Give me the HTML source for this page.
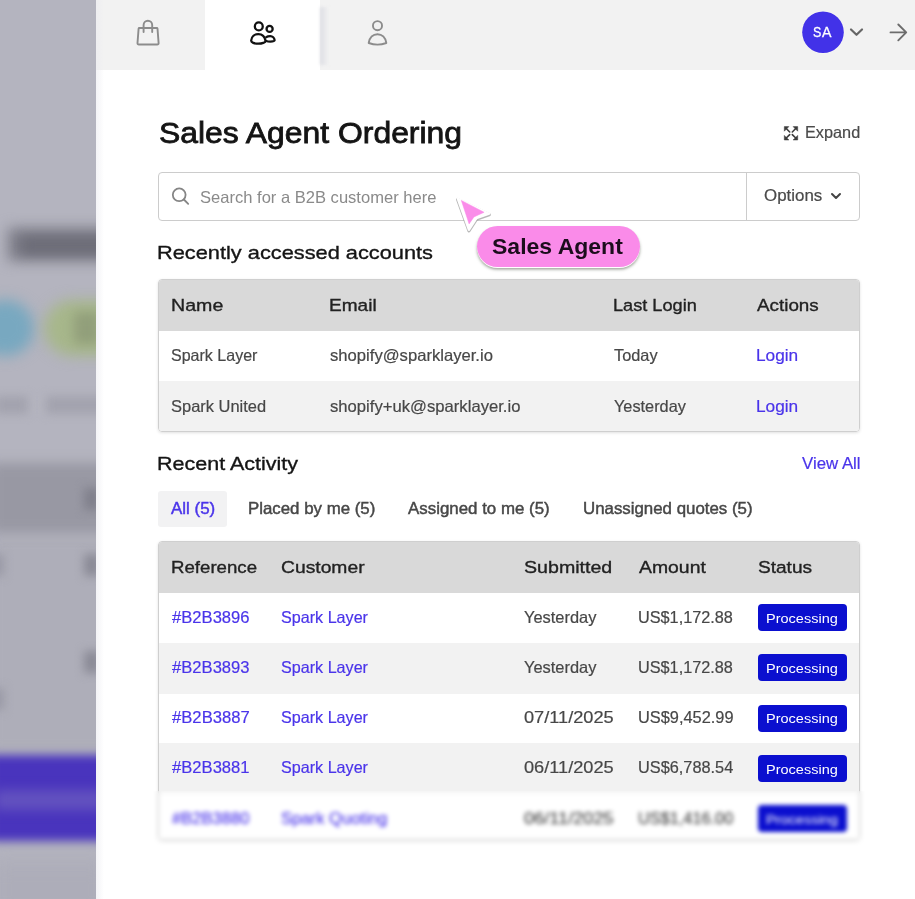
<!DOCTYPE html>
<html><head><meta charset="utf-8">
<style>
*{box-sizing:border-box;margin:0;padding:0}
html,body{width:915px;height:899px;overflow:hidden}
body{position:relative;background:#b4b4bf;font-family:"Liberation Sans",sans-serif;color:#222}
.abs{position:absolute}
#bg{position:absolute;left:0;top:0;width:96px;height:899px;overflow:hidden}
#bg .b{position:absolute;filter:blur(6px)}
#panel{position:absolute;left:96px;top:0;width:819px;height:899px;background:#fff}
#topbar{position:absolute;left:96px;top:0;width:819px;height:70px;background:#f2f2f2}
#acttab{position:absolute;left:205px;top:0;width:115px;height:71px;background:#fff}
.t{position:absolute;white-space:nowrap;line-height:1;transform-origin:0 0}
.tbl{position:absolute;left:158px;width:702px;border:1px solid #cfcfcf;border-radius:4px;overflow:hidden;box-shadow:0 1px 3px rgba(0,0,0,0.12)}
.row{position:absolute;left:0;width:700px}
.badge{position:absolute;left:758px;width:89px;height:27px;background:#0b0fcf;border-radius:4px}
</style></head>
<body>
<div id="bg">
  <div class="b" style="left:-10px;top:860px;width:120px;height:60px;background:#adadb9;filter:blur(10px)"></div>
  <div class="b" style="left:8px;top:228px;width:104px;height:33px;background:#7c7c87;filter:blur(7px)"></div>
  <div class="b" style="left:22px;top:237px;width:90px;height:17px;background:#6c6c77;filter:blur(6px)"></div>
  <div class="b" style="left:-24px;top:300px;width:58px;height:56px;border-radius:28px;background:#78a8c0;filter:blur(7px)"></div>
  <div class="b" style="left:44px;top:300px;width:94px;height:56px;border-radius:28px;background:#a7b78b;filter:blur(7px)"></div>
  <div class="b" style="left:74px;top:312px;width:26px;height:32px;background:#919e7a;filter:blur(6px)"></div>
  <div class="b" style="left:-4px;top:396px;width:32px;height:18px;background:#a3a3ae;filter:blur(5px)"></div>
  <div class="b" style="left:46px;top:396px;width:64px;height:18px;background:#a3a3ae;filter:blur(5px)"></div>
  <div class="b" style="left:-10px;top:536px;width:120px;height:216px;background:#aeaeb9;filter:blur(6px)"></div>
  <div class="b" style="left:-10px;top:463px;width:120px;height:70px;background:#9898a3;filter:blur(6px)"></div>
  <div class="b" style="left:84px;top:488px;width:16px;height:22px;background:#80808c;filter:blur(5px)"></div>
  <div class="b" style="left:84px;top:554px;width:16px;height:22px;background:#8a8a96;filter:blur(5px)"></div>
  <div class="b" style="left:84px;top:651px;width:16px;height:22px;background:#8a8a96;filter:blur(5px)"></div>
  <div class="b" style="left:-10px;top:554px;width:14px;height:22px;background:#9a9aa6;filter:blur(5px)"></div>
  <div class="b" style="left:-10px;top:688px;width:14px;height:22px;background:#9a9aa6;filter:blur(5px)"></div>
  <div class="b" style="left:-10px;top:755px;width:120px;height:86px;background:#4934bd;filter:blur(5px)"></div>
  <div class="b" style="left:-5px;top:790px;width:110px;height:20px;background:#6352bf;filter:blur(6px)"></div>
</div>
<div id="panel"></div>
<div id="topbar"></div>
<div class="abs" style="left:96px;top:0;width:8px;height:899px;background:linear-gradient(to right,rgba(235,235,240,0.6),rgba(255,255,255,0))"></div>
<div id="acttab"></div>
<div class="abs" style="left:320px;top:7px;width:9px;height:58px;background:linear-gradient(to right,#dcdde3,#f2f2f2);filter:blur(1.5px)"></div>

<svg class="abs" style="left:0;top:0" width="915" height="70" viewBox="0 0 915 70" fill="none" stroke-linecap="round" stroke-linejoin="round">
  <g stroke="#8c8c8c" stroke-width="1.9">
    <path d="M139.2 28 H156.9 Q157.4 28 157.5 28.6 L158.6 43 Q158.7 44.5 157.2 44.5 H138.9 Q137.4 44.5 137.5 43 L138.6 28.6 Q138.7 28 139.2 28 Z"/>
    <path d="M143.6 32 V25 A4.3 4.3 0 0 1 152.2 25 V32"/>
    <circle cx="377.5" cy="25.7" r="4.55"/>
    <path d="M368.7 43 C369.5 37.5 373 34.2 377.5 34.2 C382 34.2 385.5 37.5 386.3 43 C381 45 374 45 368.7 43 Z"/>
  </g>
  <g stroke="#111" stroke-width="2.3">
    <circle cx="258.8" cy="26.4" r="3.95"/>
    <circle cx="269.6" cy="28.9" r="3.05"/>
    <path d="M251.2 40.5 C251.5 36.5 254.5 34.1 258.3 34.1 C262 34.1 264.8 36.5 265.5 40.8 C265.6 42.5 262 43.7 258.3 43.7 C254.5 43.7 251 42.5 251.2 40.5 Z"/>
    <path d="M266.3 37.2 C267.5 36.2 269 36.1 270.3 36.1 C272.5 36.1 274.4 38 274.6 40.2 C274.5 41.3 272 41.6 270.3 41.6 C268.5 41.6 267 41.3 266.3 41"/>
  </g>
  <circle cx="823" cy="32.2" r="21.3" fill="#fbfbf4" stroke="none"/>
  <circle cx="823" cy="32.2" r="20.8" fill="#4232e8" stroke="none"/>
  <path d="M851 29.5 L856.5 34.8 L862 29.5" stroke="#666" stroke-width="2.2"/>
  <path d="M890.5 32.4 H906 M898.3 24.5 L906.2 32.4 L898.3 40.3" stroke="#6c6c6c" stroke-width="1.9"/>
</svg>
<svg class="abs" style="left:0;top:100px" width="915" height="60" viewBox="0 100 915 60"><path d="M789.7 132.0 L786.0 128.3" stroke="#3c3c3c" stroke-width="1.6" stroke-linecap="round"/><path d="M784.3 126.6 L788.9 126.6 L784.3 131.2 Z" fill="#3c3c3c" stroke="#3c3c3c" stroke-width="0.5" stroke-linejoin="round"/><path d="M789.7 134.6 L786.0 138.3" stroke="#3c3c3c" stroke-width="1.6" stroke-linecap="round"/><path d="M784.3 140.0 L788.9 140.0 L784.3 135.4 Z" fill="#3c3c3c" stroke="#3c3c3c" stroke-width="0.5" stroke-linejoin="round"/><path d="M792.3 132.0 L796.0 128.3" stroke="#3c3c3c" stroke-width="1.6" stroke-linecap="round"/><path d="M797.7 126.6 L793.1 126.6 L797.7 131.2 Z" fill="#3c3c3c" stroke="#3c3c3c" stroke-width="0.5" stroke-linejoin="round"/><path d="M792.3 134.6 L796.0 138.3" stroke="#3c3c3c" stroke-width="1.6" stroke-linecap="round"/><path d="M797.7 140.0 L793.1 140.0 L797.7 135.4 Z" fill="#3c3c3c" stroke="#3c3c3c" stroke-width="0.5" stroke-linejoin="round"/></svg>

<div class="abs" style="left:158px;top:172px;width:702px;height:49px;border:1px solid #cccccc;border-radius:4px;background:#fff"></div>
<div class="abs" style="left:746px;top:173px;width:1px;height:47px;background:#cccccc"></div>
<svg class="abs" style="left:165px;top:182px" width="30" height="28" viewBox="165 182 30 28" fill="none" stroke="#858585" stroke-width="1.8" stroke-linecap="round"><circle cx="179.2" cy="194.8" r="6.4"/><path d="M183.9 199.5 L188.2 203.8"/></svg>
<svg class="abs" style="left:829px;top:191px" width="14" height="10" viewBox="0 0 14 10" fill="none" stroke="#444" stroke-width="2" stroke-linecap="round" stroke-linejoin="round"><path d="M3 3 L7 7 L11 3"/></svg>

<div class="tbl" style="top:279px;height:153px">
  <div class="row" style="top:0;height:51px;background:#d9d9d9"></div>
  <div class="row" style="top:51px;height:50px;background:#fff"></div>
  <div class="row" style="top:101px;height:51px;background:#f2f2f2"></div>
</div>

<div class="abs" style="left:158px;top:491px;width:69px;height:36px;background:#f2f2f3;border-radius:3px"></div>

<div class="tbl" style="top:541px;height:299px">
  <div class="row" style="top:0;height:51px;background:#d9d9d9"></div>
  <div class="row" style="top:51px;height:50px;background:#fff"></div>
  <div class="row" style="top:101px;height:51px;background:#f2f2f2"></div>
  <div class="row" style="top:152px;height:49px;background:#fff"></div>
  <div class="row" style="top:201px;height:50px;background:#f2f2f2"></div>
  <div class="row" style="top:251px;height:47px;background:#fff"></div>
</div>
<div class="badge" style="top:604px"></div>
<div class="badge" style="top:654px"></div>
<div class="badge" style="top:705px"></div>
<div class="badge" style="top:755px"></div>
<div class="badge" style="top:805px"></div>

<div class="t" style="left:158.60px;top:119.00px;font-size:29px;font-weight:normal;color:#141414;transform:scaleX(1.0992);-webkit-text-stroke:0.8px #141414;">Sales Agent Ordering</div>
<div class="t" style="left:805.43px;top:124.00px;font-size:16.5px;font-weight:normal;color:#4a4a4a;transform:scaleX(0.9861);-webkit-text-stroke:0.2px #4a4a4a;">Expand</div>
<div class="t" style="left:200.08px;top:189.00px;font-size:16.5px;font-weight:normal;color:#8a8a8a;transform:scaleX(1.0029);">Search for a B2B customer here</div>
<div class="t" style="left:763.61px;top:187.00px;font-size:16.5px;font-weight:normal;color:#4a4a4a;transform:scaleX(1.0238);-webkit-text-stroke:0.2px #4a4a4a;">Options</div>
<div class="t" style="left:157.30px;top:243.00px;font-size:19px;font-weight:normal;color:#151515;transform:scaleX(1.1461);-webkit-text-stroke:0.35px #151515;">Recently accessed accounts</div>
<div class="t" style="left:170.77px;top:297.00px;font-size:17.4px;font-weight:normal;color:#222;transform:scaleX(1.1274);-webkit-text-stroke:0.35px #222;">Name</div>
<div class="t" style="left:328.81px;top:297.00px;font-size:17.4px;font-weight:normal;color:#222;transform:scaleX(1.0951);-webkit-text-stroke:0.35px #222;">Email</div>
<div class="t" style="left:613.18px;top:297.00px;font-size:17.4px;font-weight:normal;color:#222;transform:scaleX(1.0441);-webkit-text-stroke:0.35px #222;">Last Login</div>
<div class="t" style="left:757.30px;top:297.00px;font-size:17.4px;font-weight:normal;color:#222;transform:scaleX(1.0829);-webkit-text-stroke:0.35px #222;">Actions</div>
<div class="t" style="left:171.30px;top:347.00px;font-size:16.5px;font-weight:normal;color:#474747;transform:scaleX(0.9710);-webkit-text-stroke:0.2px #474747;">Spark Layer</div>
<div class="t" style="left:329.74px;top:347.00px;font-size:16.5px;font-weight:normal;color:#474747;transform:scaleX(1.0079);-webkit-text-stroke:0.2px #474747;">shopify@sparklayer.io</div>
<div class="t" style="left:614.14px;top:347.00px;font-size:16.5px;font-weight:normal;color:#474747;transform:scaleX(0.9892);-webkit-text-stroke:0.2px #474747;">Today</div>
<div class="t" style="left:755.65px;top:347.00px;font-size:16.5px;font-weight:normal;color:#4a34ea;transform:scaleX(1.0457);-webkit-text-stroke:0.2px #4a34ea;">Login</div>
<div class="t" style="left:171.29px;top:398.00px;font-size:16.5px;font-weight:normal;color:#474747;transform:scaleX(0.9974);-webkit-text-stroke:0.2px #474747;">Spark United</div>
<div class="t" style="left:329.74px;top:398.00px;font-size:16.5px;font-weight:normal;color:#474747;transform:scaleX(1.0091);-webkit-text-stroke:0.2px #474747;">shopify+uk@sparklayer.io</div>
<div class="t" style="left:614.15px;top:398.00px;font-size:16.5px;font-weight:normal;color:#474747;transform:scaleX(0.9873);-webkit-text-stroke:0.2px #474747;">Yesterday</div>
<div class="t" style="left:755.65px;top:398.00px;font-size:16.5px;font-weight:normal;color:#4a34ea;transform:scaleX(1.0457);-webkit-text-stroke:0.2px #4a34ea;">Login</div>
<div class="t" style="left:157.22px;top:454.00px;font-size:19.2px;font-weight:normal;color:#151515;transform:scaleX(1.1205);-webkit-text-stroke:0.35px #151515;">Recent Activity</div>
<div class="t" style="left:801.90px;top:455.00px;font-size:16.5px;font-weight:normal;color:#4a34ea;transform:scaleX(1.0192);-webkit-text-stroke:0.2px #4a34ea;">View All</div>
<div class="t" style="left:171.00px;top:500.00px;font-size:16.5px;font-weight:normal;color:#4a34ea;transform:scaleX(1.0253);-webkit-text-stroke:0.45px #4a34ea;">All (5)</div>
<div class="t" style="left:247.88px;top:500.00px;font-size:16.5px;font-weight:normal;color:#474747;transform:scaleX(1.0206);-webkit-text-stroke:0.45px #474747;">Placed by me (5)</div>
<div class="t" style="left:408.40px;top:500.00px;font-size:16.5px;font-weight:normal;color:#474747;transform:scaleX(1.0231);-webkit-text-stroke:0.45px #474747;">Assigned to me (5)</div>
<div class="t" style="left:582.55px;top:500.00px;font-size:16.5px;font-weight:normal;color:#474747;transform:scaleX(1.0211);-webkit-text-stroke:0.45px #474747;">Unassigned quotes (5)</div>
<div class="t" style="left:170.64px;top:559.00px;font-size:17.4px;font-weight:normal;color:#222;transform:scaleX(1.0727);-webkit-text-stroke:0.35px #222;">Reference</div>
<div class="t" style="left:280.80px;top:559.00px;font-size:17.4px;font-weight:normal;color:#222;transform:scaleX(1.1084);-webkit-text-stroke:0.35px #222;">Customer</div>
<div class="t" style="left:524.09px;top:559.00px;font-size:17.4px;font-weight:normal;color:#222;transform:scaleX(1.1273);-webkit-text-stroke:0.35px #222;">Submitted</div>
<div class="t" style="left:638.90px;top:559.00px;font-size:17.4px;font-weight:normal;color:#222;transform:scaleX(1.1145);-webkit-text-stroke:0.35px #222;">Amount</div>
<div class="t" style="left:757.70px;top:559.00px;font-size:17.4px;font-weight:normal;color:#222;transform:scaleX(1.0966);-webkit-text-stroke:0.35px #222;">Status</div>
<div class="t" style="left:171.80px;top:609.00px;font-size:16.5px;font-weight:normal;color:#4a34ea;transform:scaleX(1.0065);-webkit-text-stroke:0.2px #4a34ea;">#B2B3896</div>
<div class="t" style="left:280.90px;top:609.00px;font-size:16.5px;font-weight:normal;color:#4a34ea;transform:scaleX(0.9778);-webkit-text-stroke:0.2px #4a34ea;">Spark Layer</div>
<div class="t" style="left:524.14px;top:609.00px;font-size:16.5px;font-weight:normal;color:#474747;transform:scaleX(0.9956);-webkit-text-stroke:0.2px #474747;">Yesterday</div>
<div class="t" style="left:637.58px;top:609.00px;font-size:16.5px;font-weight:normal;color:#474747;transform:scaleX(0.9849);-webkit-text-stroke:0.2px #474747;">US$1,172.88</div>
<div class="t" style="left:766.47px;top:612.00px;font-size:13.6px;font-weight:normal;color:#ffffff;transform:scaleX(1.0680);">Processing</div>
<div class="t" style="left:171.80px;top:659.00px;font-size:16.5px;font-weight:normal;color:#4a34ea;transform:scaleX(1.0065);-webkit-text-stroke:0.2px #4a34ea;">#B2B3893</div>
<div class="t" style="left:280.90px;top:659.00px;font-size:16.5px;font-weight:normal;color:#4a34ea;transform:scaleX(0.9778);-webkit-text-stroke:0.2px #4a34ea;">Spark Layer</div>
<div class="t" style="left:524.14px;top:659.00px;font-size:16.5px;font-weight:normal;color:#474747;transform:scaleX(0.9956);-webkit-text-stroke:0.2px #474747;">Yesterday</div>
<div class="t" style="left:637.58px;top:659.00px;font-size:16.5px;font-weight:normal;color:#474747;transform:scaleX(0.9849);-webkit-text-stroke:0.2px #474747;">US$1,172.88</div>
<div class="t" style="left:766.47px;top:662.00px;font-size:13.6px;font-weight:normal;color:#ffffff;transform:scaleX(1.0680);">Processing</div>
<div class="t" style="left:171.80px;top:709.00px;font-size:16.5px;font-weight:normal;color:#4a34ea;transform:scaleX(1.0091);-webkit-text-stroke:0.2px #4a34ea;">#B2B3887</div>
<div class="t" style="left:280.90px;top:709.00px;font-size:16.5px;font-weight:normal;color:#4a34ea;transform:scaleX(0.9778);-webkit-text-stroke:0.2px #4a34ea;">Spark Layer</div>
<div class="t" style="left:523.83px;top:709.00px;font-size:16.5px;font-weight:normal;color:#474747;transform:scaleX(1.1026);-webkit-text-stroke:0.2px #474747;">07/11/2025</div>
<div class="t" style="left:637.58px;top:709.00px;font-size:16.5px;font-weight:normal;color:#474747;transform:scaleX(0.9913);-webkit-text-stroke:0.2px #474747;">US$9,452.99</div>
<div class="t" style="left:766.47px;top:712.00px;font-size:13.6px;font-weight:normal;color:#ffffff;transform:scaleX(1.0680);">Processing</div>
<div class="t" style="left:171.80px;top:759.00px;font-size:16.5px;font-weight:normal;color:#4a34ea;transform:scaleX(1.0065);-webkit-text-stroke:0.2px #4a34ea;">#B2B3881</div>
<div class="t" style="left:280.90px;top:759.00px;font-size:16.5px;font-weight:normal;color:#4a34ea;transform:scaleX(0.9778);-webkit-text-stroke:0.2px #4a34ea;">Spark Layer</div>
<div class="t" style="left:523.83px;top:759.00px;font-size:16.5px;font-weight:normal;color:#474747;transform:scaleX(1.1026);-webkit-text-stroke:0.2px #474747;">06/11/2025</div>
<div class="t" style="left:637.58px;top:759.00px;font-size:16.5px;font-weight:normal;color:#474747;transform:scaleX(0.9886);-webkit-text-stroke:0.2px #474747;">US$6,788.54</div>
<div class="t" style="left:766.47px;top:763.00px;font-size:13.6px;font-weight:normal;color:#ffffff;transform:scaleX(1.0680);">Processing</div>
<div class="t" style="left:171.80px;top:810.00px;font-size:16.5px;font-weight:normal;color:#4a34ea;transform:scaleX(1.0058);-webkit-text-stroke:0.2px #4a34ea;">#B2B3880</div>
<div class="t" style="left:280.88px;top:810.00px;font-size:16.5px;font-weight:normal;color:#4a34ea;transform:scaleX(1.0083);-webkit-text-stroke:0.2px #4a34ea;">Spark Quoting</div>
<div class="t" style="left:523.83px;top:810.00px;font-size:16.5px;font-weight:normal;color:#474747;transform:scaleX(1.1026);-webkit-text-stroke:0.2px #474747;">06/11/2025</div>
<div class="t" style="left:637.58px;top:810.00px;font-size:16.5px;font-weight:normal;color:#474747;transform:scaleX(0.9886);-webkit-text-stroke:0.2px #474747;">US$1,416.00</div>
<div class="t" style="left:766.47px;top:813.00px;font-size:13.6px;font-weight:normal;color:#ffffff;transform:scaleX(1.0680);">Processing</div>
<div class="t" style="left:812.51px;top:24.00px;font-size:15.5px;font-weight:normal;color:#ffffff;transform:scaleX(0.8041);-webkit-text-stroke:0.3px #ffffff;">S</div>
<div class="t" style="left:822.20px;top:24.00px;font-size:15.5px;font-weight:normal;color:#ffffff;transform:scaleX(0.9122);-webkit-text-stroke:0.3px #ffffff;">A</div>
<div class="abs" style="left:161px;top:743px;width:696px;height:48px;backdrop-filter:blur(0.5px)"></div>
<div class="abs" style="left:140px;top:791px;width:740px;height:70px;backdrop-filter:blur(2px)"></div>

<svg class="abs" style="left:440px;top:180px" width="70" height="70" viewBox="440 180 70 70">
  <path d="M457.6 198.4 L489.2 213.8 L476.4 218.3 L468.9 229.8 Z" transform="translate(0 1)" fill="#8a8a8a" stroke="#8a8a8a" stroke-width="3.2" stroke-linejoin="round" opacity="0.6"/>
  <path d="M457.6 198.4 L489.2 213.8 L476.4 218.3 L468.9 229.8 Z" fill="#fff" stroke="#fff" stroke-width="2.2" stroke-linejoin="round"/>
  <path d="M461.3 200.4 L484.1 212.3 L474 216.9 L469.1 223.9 Z" fill="#fa8ce9" stroke="#fa8ce9" stroke-width="0.5" stroke-linejoin="round"/>
</svg>
<div class="abs" style="left:477px;top:225.5px;width:163px;height:41px;border-radius:20.5px;background:#fa8be9;box-shadow:0 1px 0 #fff,0 2.5px 3px rgba(60,70,50,0.5)"></div>
<div class="t" style="left:492.24px;top:235.00px;font-size:22.8px;font-weight:bold;color:#1c0d1c;transform:scaleX(1.0089);">Sales Agent</div>
</body></html>
